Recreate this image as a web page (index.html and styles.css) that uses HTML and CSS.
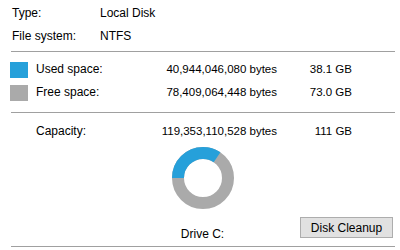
FILE: index.html
```html
<!DOCTYPE html>
<html>
<head>
<meta charset="utf-8">
<link rel="stylesheet" href="styles.css">
</head>
<body>
<div class="page">
  <div class="info">
    <div class="lbl">Type:</div><div>Local Disk</div>
    <div class="lbl">File system:</div><div>NTFS</div>
  </div>
  <div class="sep sep1"></div>
  <div class="space">
    <span class="sw used"></span><span>Used space:</span><span class="num">40,944,046,080 bytes</span><span class="num">38.1 GB</span>
    <span class="sw free"></span><span>Free space:</span><span class="num">78,409,064,448 bytes</span><span class="num">73.0 GB</span>
  </div>
  <div class="sep sep2"></div>
  <div class="space cap">
    <span></span><span>Capacity:</span><span class="num">119,353,110,528 bytes</span><span class="num">111 GB</span>
  </div>
  <div class="donut">
    <svg width="62" height="62" viewBox="0 0 62 62">
      <circle cx="31" cy="31" r="25" fill="none" stroke="#aaaaaa" stroke-width="12"/>
      <circle cx="31" cy="31" r="25" fill="none" stroke="#26a0da" stroke-width="12" stroke-dasharray="53.9 200" transform="rotate(180 31 31)"/>
    </svg>
  </div>
  <div class="bottom">
    <span></span>
    <div class="drive">Drive C:</div>
    <button class="btn">Disk Cleanup</button>
  </div>
  <div class="sep sep3"></div>
</div>
</body>
</html>
```
FILE: styles.css
```css
html, body {
  margin: 0;
  padding: 0;
  background: #ffffff;
}
body {
  font-family: "Liberation Sans", Arial, sans-serif;
  font-size: 12px;
  color: #000;
  width: 400px;
  height: 250px;
  overflow: hidden;
}
.page {
  padding: 2px 5px 0 10px;
  display: flex;
  flex-direction: column;
}
.info {
  display: grid;
  grid-template-columns: 88px auto;
  grid-auto-rows: 23px;
  line-height: 23px;
  padding-left: 2px;
}
.sep {
  height: 0;
  border-top: 1px solid #a0a0a0;
  margin-left: 1px;
}
.sep1 { margin-top: 3px; }
.space {
  display: grid;
  grid-template-columns: 18px 110px 123px 67px;
  column-gap: 8px;
  grid-auto-rows: 23px;
  line-height: 23px;
  align-items: center;
  margin-top: 6px;
}
.num {
  text-align: right;
  font-size: 11.5px;
}
.sw {
  width: 18px;
  height: 16px;
  display: block;
}
.used { background: #26a0da; }
.free { background: #aaaaaa; }
.sep2 { margin-top: 8px; }
.cap { margin-top: 7px; }
.donut {
  display: flex;
  justify-content: center;
  margin-top: 4px;
  height: 62px;
}
.donut svg { display: block; }
.bottom {
  display: grid;
  grid-template-columns: 1fr auto 1fr;
  align-items: start;
  margin-top: 8px;
}
.drive {
  margin-top: 10px;
  line-height: 15px;
}
.btn {
  justify-self: end;
  margin-right: 2px;
  width: 93px;
  height: 21px;
  background: #e1e1e1;
  border: 1px solid #adadad;
  font-family: "Liberation Sans", Arial, sans-serif;
  font-size: 12px;
  color: #000;
  padding: 0;
}
.sep3 { margin-top: 4px; }
```
